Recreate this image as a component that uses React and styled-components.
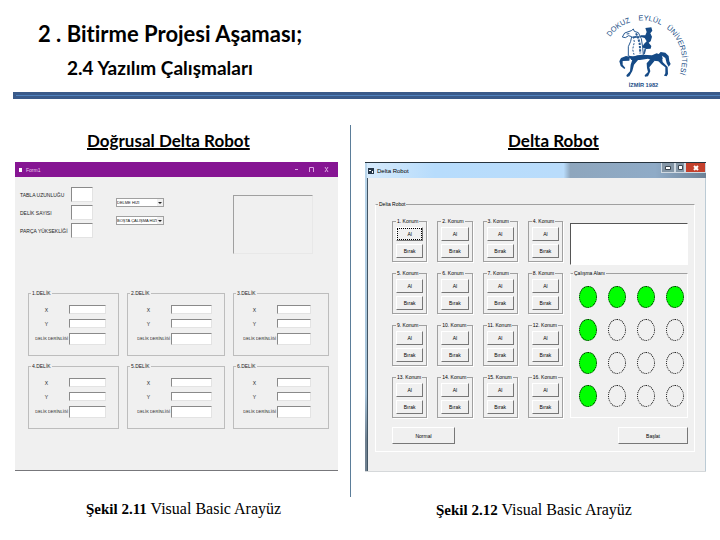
import { useState } from 'react';
import styled, { createGlobalStyle } from 'styled-components';

const GlobalStyle = createGlobalStyle`
  * {
    box-sizing: border-box;
  }
  body {
    margin: 0;
    background-color: #ffffff;
    color: #000000;
    font-family: Lato, sans-serif;
    font-variant-ligatures: none;
  }
`;

const Slide = styled.main`
  min-height: 100vh;
  overflow: hidden;
`;
const Header = styled.header`
  display: flex;
  justify-content: space-between;
  height: 92px;
  padding: 0 20px 0 38px;
`;
const Title = styled.h1`
  margin: 20px 0 0;
  font-size: 22px;
  line-height: 28px;
  font-weight: 700;
`;
const Subtitle = styled.h2`
  margin: 8px 0 0 29px;
  font-size: 19px;
  line-height: 24px;
  font-weight: 700;
`;
const LogoSvg = styled.svg`
  flex: none;
  width: 110px;
  height: 92px;
`;
const Rule = styled.hr`
  height: 7px;
  margin: 0 0 0 13px;
  border: solid #3a5a8a;
  border-width: 3px 0 3px 3px;
  background-color: #4f81bd;
`;
const Columns = styled.div`
  display: grid;
  grid-template-columns: 350fr 1px 369fr;
  margin-top: 26px;
`;
const Divider = styled.div`
  height: 372px;
  background-color: #5b7d99;
`;
const Figure = styled.figure`
  margin: 0;
  padding: 0 ${(props) => props.$right}px 0 ${(props) => props.$left}px;
`;
const FigureTitle = styled.h3`
  height: 37px;
  margin: 0;
  padding: 4px 0 0 ${(props) => props.$indent}px;
  font-size: 17px;
  line-height: 24px;
  font-weight: 700;
  text-decoration: underline;
  text-decoration-thickness: 2px;
`;
const Caption = styled.figcaption`
  margin-top: 28px;
  padding-left: ${(props) => props.$indent}px;
  font-family: 'Liberation Serif', serif;
  font-size: 16px;
  line-height: 20px;
  white-space: nowrap;

  b {
    font-size: 15px;
  }
`;

/* linear delta robot window */
const LinearWindow = styled.section`
  border-bottom: 1px solid #77777b;
  background-color: #f0f0f0;
  color: #222222;
  font-family: 'Liberation Sans', sans-serif;
  font-size: 5px;
  line-height: 6px;
`;
const PurpleBar = styled.div`
  display: flex;
  align-items: center;
  gap: 4px;
  height: 15px;
  padding: 0 4px;
  background-color: #861593;
  color: #e8c8ec;
`;
const FormIcon = styled.span`
  width: 3px;
  height: 4px;
  background-color: #ffffff;
`;
const BarButtons = styled.div`
  display: flex;
  margin-left: auto;
`;
const PlainBarButton = styled.button`
  width: 15px;
  height: 14px;
  padding: 0;
  border: none;
  background: none;
  color: #dda6e3;
  line-height: 0;
`;
const LinearBody = styled.div`
  padding: 10px 9px 41px 5px;
`;
const Settings = styled.div`
  display: flex;
  align-items: flex-start;
  padding-right: 16px;
`;
const Fields = styled.div`
  display: grid;
  grid-template-columns: 51px 22px;
  grid-auto-rows: 15px;
  align-items: center;
  row-gap: 3px;
`;
const SunkenInput = styled.input`
  width: 100%;
  min-width: 0;
  height: 100%;
  padding: 0 2px;
  border: 1px solid #e3e3e3;
  border-top-color: #8a8a8a;
  border-left-color: #8a8a8a;
  background-color: #ffffff;
  font-size: 5px;
`;
const Combos = styled.div`
  display: grid;
  gap: 9px;
  margin: 11px 0 0 23px;
`;
const ComboBox = styled.div`
  display: grid;
  grid-template-columns: 1fr 6px;
  align-items: center;
  width: 48px;
  height: 9px;
  border: 1px solid #a0a0a0;
  background-color: #ffffff;

  svg {
    grid-area: 1 / 2;
    background-color: #f0f0f0;
    pointer-events: none;
  }
`;
const Combo = styled.select`
  grid-area: 1 / 1 / 2 / 3;
  width: 100%;
  height: 7px;
  padding: 0;
  border: none;
  appearance: none;
  background: none;
  color: #111111;
  font-family: inherit;
  font-size: 4px;
  line-height: 7px;
`;
const Preview = styled.div`
  flex: 0 1 80px;
  height: 59px;
  margin: 8px 0 0 auto;
  border: 1px solid #e8e8e8;
  border-top-color: #a0a0a0;
  border-left-color: #a0a0a0;
`;
const Holes = styled.div`
  display: grid;
  grid-template-columns: 91fr 98fr 96fr;
  gap: 7px 8px;
  margin-top: 36px;
  padding-left: 8px;
`;
const HoleBox = styled.fieldset`
  display: grid;
  grid-template-columns: 33px 1fr;
  grid-template-rows: 9px 9px 12px;
  align-items: center;
  row-gap: 5px;
  min-width: 0;
  height: 66px;
  margin: 0;
  padding: 9px ${(props) => props.$right}px 0 ${(props) => props.$left}px;
  border: 1px solid #bdbdbd;

  legend {
    margin-left: ${(props) => -props.$left + 2}px;
    padding: 0 1px;
    height: 6px;
  }
`;
const HoleLabel = styled.label`
  justify-self: ${(props) => (props.$long ? 'end' : 'center')};
  padding-right: ${(props) => (props.$long ? 1 : 12)}px;
  font-size: ${(props) => (props.$long ? 4 : 5)}px;
  white-space: nowrap;
`;

/* delta robot window */
const DeltaWindow = styled.section`
  padding-left: 2px;
  border-top: 1px solid #26333d;
  border-bottom: 1px solid #d5d8da;
  background: linear-gradient(#b9d5ea, #a3c0d6 75%, #6f8090 90%);
  color: #000000;
  font-family: 'Liberation Sans', sans-serif;
  font-size: 5px;
  line-height: 6px;
`;
const AeroBar = styled.div`
  display: flex;
  align-items: center;
  gap: 3px;
  height: 15px;
  padding-left: 1px;
  background: linear-gradient(
    90deg,
    #d6eafb 0%,
    #b7dcfc 20%,
    #b9dcfb 58%,
    #8ea6bd 60%,
    #8fabc7 85%,
    #6c8196 100%
  );
  font-size: 6px;
`;
const AeroButton = styled.button`
  display: flex;
  align-items: center;
  justify-content: center;
  width: ${(props) => props.$width}px;
  height: 10px;
  padding: 0;
  border: 1px solid #cfd9e2;
  border-top: none;
  background-color: ${(props) => (props.$close ? '#c4402c' : '#8496a6')};
`;
const AeroButtons = styled(BarButtons)`
  align-self: flex-start;
`;
const DeltaBody = styled.div`
  padding: 22px 10px 19px 7px;
  border-left: 1px solid #435665;
  border-right: 1px solid #bccbd5;
  background-color: #f0f0f0;
`;
const EtchedBox = styled.fieldset`
  min-width: 0;
  margin: 0;
  padding: 0;
  border: 1px solid #a0a0a0;
  box-shadow: 1px 1px 0 #ffffff;

  legend {
    height: 6px;
    margin-left: 3px;
    padding: 0 1px;
    white-space: nowrap;
  }
`;
const RobotBox = styled(EtchedBox)`
  padding: 10px 6px 7px 16px;
  border-color: #a0a0a0 #ffffff #ffffff;
  box-shadow: none;

  > legend {
    height: 8px;
    margin-left: -14px;
    line-height: 8px;
  }
`;
const RobotGrid = styled.div`
  display: grid;
  grid-template-columns: 171fr 118fr;
  gap: 7px;
`;
const Positions = styled.div`
  display: grid;
  grid-template-columns: repeat(4, 1fr);
  gap: 8px 10px;
`;
const PositionBox = styled(EtchedBox)`
  display: grid;
  gap: 3px;
  height: 44px;
  padding: 3px;
`;
const PositionLegend = styled.legend`
  && {
    margin-left: 0;
  }
`;
const FormButton = styled.button`
  width: 100%;
  height: 14px;
  padding: 0;
  border: 1px solid #777777;
  border-top-color: #ffffff;
  border-left-color: #ffffff;
  outline: ${(props) => (props.$focused ? '1px dotted #000000' : 'none')};
  outline-offset: -2px;
  background-color: #f0f0f0;
  color: #000000;
  font-family: inherit;
  font-size: 5px;
  line-height: 8px;
`;
const WorkColumn = styled.div`
  display: flex;
  flex-direction: column;
  padding-top: 5px;
  gap: 5px;
`;
const Output = styled.textarea`
  display: block;
  width: 100%;
  height: 42px;
  padding: 2px;
  border: 1px solid #ffffff;
  border-top-color: #555555;
  border-left-color: #555555;
  background-color: #ffffff;
  resize: none;
  font-size: 5px;
`;
const WorkArea = styled(EtchedBox)`
  flex: 1;
  padding: 10px 3px 0 8px;
  border-color: #a0a0a0 #ffffff #ffffff;
  box-shadow: none;

  legend {
    margin-left: -6px;
  }
`;
const Spots = styled.div`
  display: grid;
  grid-template-columns: repeat(4, 18px);
  justify-content: space-between;
  row-gap: 11px;
`;
const Spot = styled.span`
  height: 22px;
  border: 1px dotted #000000;
  border-radius: 50%;
  background-color: ${(props) => (props.$filled ? '#00ff00' : 'transparent')};
`;
const Actions = styled.div`
  display: flex;
  justify-content: space-between;
  margin-top: 9px;
`;
const ActionButton = styled(FormButton)`
  width: ${(props) => props.$width}px;
  height: 17px;
`;

const fields = ['TABLA UZUNLUĞU', 'DELİK SAYISI', 'PARÇA YÜKSEKLİĞİ'];
const speeds = ['DELME HIZI', 'BOŞTA ÇALIŞMA HIZI'];
const holePadding = [
  { left: 7, right: 12 },
  { left: 10, right: 12 },
  { left: 10, right: 17 },
];
const holes = [1, 2, 3, 4, 5, 6];
const axes = ['X', 'Y', 'DELİK DERİNLİĞİ'];
const positions = Array.from({ length: 16 }, (_, i) => i + 1);

function Logo() {
  return (
    <LogoSvg viewBox="0 0 330 276" role="img" aria-label="Dokuz Eylül Üniversitesi">
      <defs>
        <path id="ring" d="M 43 214 A 119 119 0 1 1 235 270" />
      </defs>
      <g fill="#1d4f87" fontFamily="Liberation Sans, sans-serif">
        <text fontSize="22">
          <textPath href="#ring" startOffset="108">
            {'DOKUZ\u00a0\u00a0\u00a0\u00a0EYLÜL\u00a0\u00a0\u00a0ÜNİVERSİTESİ'}
          </textPath>
        </text>
        <text x="116" y="260" fontSize="17" fontWeight="700">
          İZMİR 1982
        </text>
      </g>
      <g fill="#154a86">
        <path d="M112 164 Q126 172 142 166 L158 164 L186 166 L200 160 L216 166 L218 176 L206 184 L190 182 L174 176 L150 180 L124 180 Z" />
        <path d="M120 170 L108 168 L93 174 L88 184 L92 198 L103 207 L106 204 L98 194 L98 183 L118 182 Z" />
        <path d="M128 176 L122 194 L120 214 L109 226 L111 231 L118 229 L127 213 L132 194 L146 178 Z" />
        <path d="M182 176 L170 190 L171 204 L174 216 L164 226 L165 230 L174 229 L181 214 L178 202 L194 182 Z" />
        <path d="M198 176 L214 193 L226 202 L226 220 L222 227 L230 229 L234 222 L233 201 L218 186 L216 172 Z" />
        <path d="M204 164 L212 156 L226 158 L236 168 L238 184 L242 192 L236 200 L230 190 L226 174 L214 166 Z" />
        <path d="M166 84 L184 82 L187 92 L181 100 L186 110 L182 124 L176 128 L184 138 L182 146 L168 147 L156 142 L162 132 L170 124 L164 114 L150 110 L152 106 L166 106 L170 96 Z" />
      </g>
      <g fill="none" stroke="#2a5b93" strokeWidth="3">
        <path d="M97 111 L104 99 L124 92 L130 87 L133 94 L145 98 L154 116 L158 142 L160 166" />
        <path d="M97 111 L106 113 L116 107 L125 110 L122 124 L115 140 L115 166" />
        <path d="M138 100 L144 112 L149 130 L151 160" strokeWidth="6" strokeDasharray="7 3" />
        <path d="M130 110 L133 126 L128 148 L132 164" strokeDasharray="6 4" />
        <path d="M110 102 L118 101 M126 112 L142 108 M154 110 L130 113" />
        <path d="M166 147 L162 162" strokeWidth="5" />
      </g>
    </LogoSvg>
  );
}

function LinearRobotForm() {
  const [values, setValues] = useState({});

  const handleChange = (e) => {
    setValues({ ...values, [e.target.id]: e.target.value });
  };

  return (
    <LinearWindow>
      <PurpleBar>
        <FormIcon />
        <span>Form1</span>
        <BarButtons>
          <PlainBarButton aria-label="Simge durumuna küçült">
            <svg width="5" height="5" stroke="currentColor">
              <path d="M1 2.5h3" />
            </svg>
          </PlainBarButton>
          <PlainBarButton aria-label="Ekranı kapla">
            <svg width="5" height="5" stroke="currentColor" fill="none">
              <path d="M.5 5V.5h4V5" />
            </svg>
          </PlainBarButton>
          <PlainBarButton aria-label="Kapat">
            <svg width="5" height="5" stroke="currentColor">
              <path d="M1 0l3 5M4 0L1 5" />
            </svg>
          </PlainBarButton>
        </BarButtons>
      </PurpleBar>
      <LinearBody>
        <Settings>
          <Fields>
            {fields.map((name, i) => [
              <label key={name} htmlFor={`field-${i}`}>
                {name}
              </label>,
              <SunkenInput
                key={`field-${i}`}
                id={`field-${i}`}
                value={values[`field-${i}`] || ''}
                onChange={handleChange}
              />,
            ])}
          </Fields>
          <Combos>
            {speeds.map((name) => (
              <ComboBox key={name}>
                <Combo aria-label={name}>
                  <option>{name}</option>
                </Combo>
                <svg width="6" height="7">
                  <path d="M1 3h4l-2 2z" fill="#222222" />
                </svg>
              </ComboBox>
            ))}
          </Combos>
          <Preview />
        </Settings>
        <Holes>
          {holes.map((hole) => {
            const { left, right } = holePadding[(hole - 1) % 3];
            return (
              <HoleBox key={hole} $left={left} $right={right}>
                <legend>{hole}.DELİK</legend>
                {axes.map((axis, i) => [
                  <HoleLabel key={axis} $long={i === 2} htmlFor={`hole-${hole}-${i}`}>
                    {axis}
                  </HoleLabel>,
                  <SunkenInput
                    key={i}
                    id={`hole-${hole}-${i}`}
                    value={values[`hole-${hole}-${i}`] || ''}
                    onChange={handleChange}
                  />,
                ])}
              </HoleBox>
            );
          })}
        </Holes>
      </LinearBody>
    </LinearWindow>
  );
}

function DeltaRobotForm() {
  return (
    <DeltaWindow>
      <AeroBar>
        <svg width="6" height="7">
          <path d="M0 1h6v6H0z" fill="#27384a" />
          <path d="M1 3h2v1H1zM4 4h1v2H4z" fill="#ffffff" />
        </svg>
        <span>Delta Robot</span>
        <AeroButtons>
          <AeroButton $width={14} aria-label="Simge durumuna küçült">
            <svg width="6" height="4">
              <path d="M.5.5h5v3h-5z" fill="#ffffff" stroke="#3b4650" />
            </svg>
          </AeroButton>
          <AeroButton $width={10} aria-label="Ekranı kapla">
            <svg width="5" height="5">
              <path d="M.5.5h4v4h-4z" fill="#ffffff" stroke="#3b4650" />
            </svg>
          </AeroButton>
          <AeroButton $width={21} $close aria-label="Kapat">
            <svg width="6" height="6" stroke="#ffffff" strokeWidth="2">
              <path d="M1 1l4 4M5 1L1 5" />
            </svg>
          </AeroButton>
        </AeroButtons>
      </AeroBar>
      <DeltaBody>
        <RobotBox>
          <legend>Delta Robot</legend>
          <RobotGrid>
            <Positions>
              {positions.map((n) => (
                <PositionBox key={n}>
                  <PositionLegend>{n}. Konum</PositionLegend>
                  <FormButton $focused={n === 1}>Al</FormButton>
                  <FormButton>Bırak</FormButton>
                </PositionBox>
              ))}
            </Positions>
            <WorkColumn>
              <Output aria-label="Durum" />
              <WorkArea>
                <legend>Çalışma Alanı</legend>
                <Spots>
                  {positions.map((n) => (
                    <Spot key={n} $filled={n <= 4 || n % 4 === 1} />
                  ))}
                </Spots>
              </WorkArea>
            </WorkColumn>
          </RobotGrid>
          <Actions>
            <ActionButton $width={63}>Normal</ActionButton>
            <ActionButton $width={70}>Başlat</ActionButton>
          </Actions>
        </RobotBox>
      </DeltaBody>
    </DeltaWindow>
  );
}

export default function App() {
  return (
    <Slide>
      <GlobalStyle />
      <Header>
        <div>
          <Title>2 . Bitirme Projesi Aşaması;</Title>
          <Subtitle>2.4 Yazılım Çalışmaları</Subtitle>
        </div>
        <Logo />
      </Header>
      <Rule />
      <Columns>
        <Figure $left={15} $right={12}>
          <FigureTitle $indent={72}>Doğrusal Delta Robot</FigureTitle>
          <LinearRobotForm />
          <Caption $indent={71}>
            <b>Şekil 2.11</b> Visual Basic Arayüz
          </Caption>
        </Figure>
        <Divider />
        <Figure $left={14} $right={14}>
          <FigureTitle $indent={143}>Delta Robot</FigureTitle>
          <DeltaRobotForm />
          <Caption $indent={71}>
            <b>Şekil 2.12</b> Visual Basic Arayüz
          </Caption>
        </Figure>
      </Columns>
    </Slide>
  );
}
